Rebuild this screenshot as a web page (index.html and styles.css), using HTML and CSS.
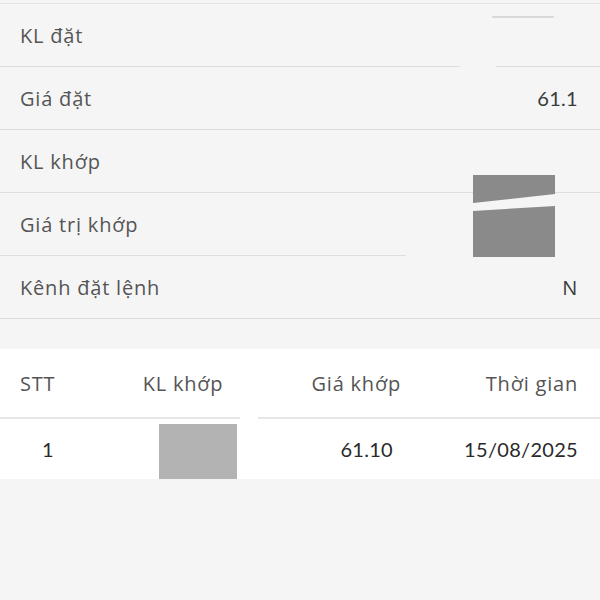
FILE: index.html
```html
<!DOCTYPE html>
<html lang="vi">
<head>
    <meta charset="UTF-8">
    <title>Chi tiết lệnh</title>
    <link rel="stylesheet" href="styles.css">
</head>
<body>
    <div class="info">
        <div class="info-row"><span class="label">KL đặt</span><span class="value"></span></div>
        <div class="info-row"><span class="label">Giá đặt</span><span class="value num">61.1</span></div>
        <div class="info-row"><span class="label">KL khớp</span><span class="value"></span></div>
        <div class="info-row"><span class="label">Giá trị khớp</span><span class="value"></span></div>
        <div class="info-row"><span class="label">Kênh đặt lệnh</span><span class="value">N</span></div>

        <!-- vùng che dữ liệu -->
        <div class="streak"></div>
        <div class="erase erase-1"></div>
        <div class="erase erase-2"></div>
        <svg class="mask-big" width="82" height="84" viewBox="0 0 82 84">
            <polygon points="0,0 82,0 82,19 0,28" fill="#8a8a8a"/>
            <polygon points="0,36 82,31 82,82 0,82" fill="#8a8a8a"/>
        </svg>
    </div>

    <div class="spacer"></div>

    <div class="table">
        <div class="t-row t-head">
            <span class="c1">STT</span>
            <span class="c2">KL khớp</span>
            <span class="c3">Giá khớp</span>
            <span class="c4">Thời gian</span>
        </div>
        <div class="t-row t-body">
            <span class="c1 num">1</span>
            <span class="c2"><span class="mask-small"></span></span>
            <span class="c3 num">61.10</span>
            <span class="c4 num">15/08/2025</span>
        </div>
    </div>
</body>
</html>
```

FILE: styles.css
```css
body {
    margin: 0;
    background: #f5f5f5;
    font-family: "Open Sans", "Lato", sans-serif;
    font-size: 20px;
    letter-spacing: 0.8px;
    color: #555;
}

.num {
    font-family: "Lato", sans-serif;
    letter-spacing: 0.3px;
    color: #2a2a2a;
}

.info {
    position: relative;
    border-top: 1px solid #e4e4e4;
    margin-top: 3px;
}

.info-row {
    display: flex;
    justify-content: space-between;
    align-items: center;
    height: 62px;
    padding: 0 22px 0 20px;
    border-bottom: 1px solid #dedede;
}

.value {
    color: #3a3a3a;
}

.streak {
    position: absolute;
    left: 492px;
    top: 12px;
    width: 62px;
    height: 2px;
    border-radius: 1px;
    background: #d8d8d8;
}

.erase {
    position: absolute;
    height: 3px;
    background: #f5f5f5;
}

.erase-1 {
    left: 460px;
    top: 62px;
    width: 36px;
}

.erase-2 {
    left: 406px;
    top: 249px;
    width: 194px;
}

.mask-big {
    position: absolute;
    left: 473px;
    top: 171px;
}

.spacer {
    height: 30px;
}

.table {
    background: #fff;
}

.t-row {
    display: grid;
    grid-template-columns: 90px 146px 145px 1fr;
    align-items: center;
    padding: 0 22px 0 20px;
}

.t-head {
    position: relative;
    height: 68px;
    border-bottom: 2px solid #e6e6e6;
}

.t-head::after {
    content: "";
    position: absolute;
    left: 240px;
    bottom: -2px;
    width: 18px;
    height: 2px;
    background: #fff;
}

.t-body {
    height: 60px;
    color: #2a2a2a;
}

.c2 {
    text-align: center;
}

.c3, .c4 {
    text-align: right;
}

.t-body .c1 {
    padding-left: 22px;
}

.t-body .c3 {
    padding-right: 8px;
}

.t-body .c2 {
    height: 60px;
    display: flex;
    justify-content: flex-start;
    align-items: flex-start;
    padding: 5px 0 0 49px;
    box-sizing: border-box;
}

.mask-small {
    display: block;
    width: 78px;
    height: 55px;
    background: #b3b3b3;
}
```
